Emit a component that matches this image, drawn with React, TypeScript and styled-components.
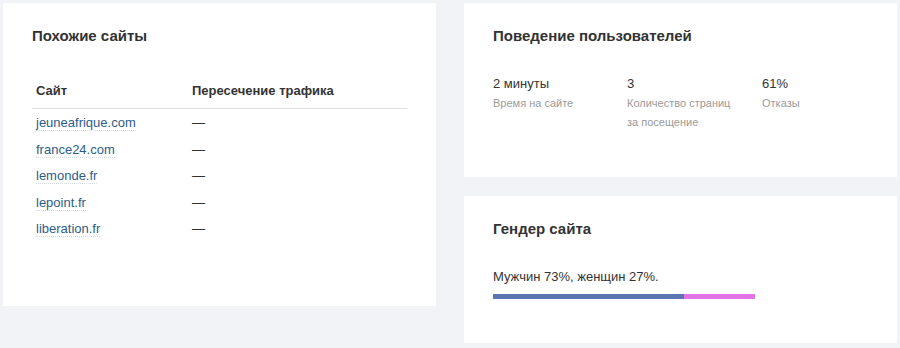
import React from "react";
import styled, { createGlobalStyle } from "styled-components";

const Global = createGlobalStyle`
  html, body { margin: 0; padding: 0; background: #f2f3f6; }
  body { font-family: "Liberation Sans", Arial, sans-serif; color: #333; }
`;

const Page = styled.div`
  display: grid;
  grid-template-columns: 433px 433px;
  column-gap: 28px;
  padding: 3px 3px 0 3px;
  align-items: start;
`;

const Column = styled.div`
  display: flex;
  flex-direction: column;
  gap: 19px;
`;

const Card = styled.div<{ $h: number }>`
  background: #fff;
  height: ${(p) => p.$h}px;
  box-sizing: border-box;
  padding: 24px 29px 0 29px;
`;

const Title = styled.h2`
  margin: 0;
  font-size: 15px;
  line-height: 18px;
  font-weight: bold;
  color: #333;
`;

const Table = styled.table`
  width: 100%;
  border-collapse: collapse;
  margin-top: 28px;
  font-size: 13px;
`;

const Th = styled.th<{ $w?: string }>`
  text-align: left;
  font-weight: bold;
  color: #333;
  padding: 10px 4px 9px 4px;
  border-bottom: 1px solid #dde0e4;
  line-height: 16px;
  width: ${(p) => p.$w ?? "auto"};
`;

const Td = styled.td`
  padding: 4px 4px 3px 4px;
  line-height: 19.5px;
  height: 19.5px;
  color: #333;
`;

const SiteLink = styled.a`
  color: #2d5c88;
  text-decoration: none;
  border-bottom: 1px dotted #d6dbe0;
`;

const Stats = styled.div`
  display: grid;
  grid-template-columns: 134px 135px 1fr;
  margin-top: 31px;
`;

const StatValue = styled.div`
  font-size: 13px;
  line-height: 16px;
  color: #333;
`;

const StatLabel = styled.div`
  font-size: 11px;
  line-height: 19px;
  color: #9a9a9a;
  margin-top: 2px;
`;

const GenderText = styled.div`
  margin-top: 31px;
  font-size: 13px;
  line-height: 16px;
  color: #333;
`;

const Bar = styled.div`
  display: flex;
  width: 262px;
  height: 5px;
  margin-top: 9px;
`;

const Segment = styled.div<{ $c: string }>`
  background: ${(p) => p.$c};
  height: 100%;
`;

const sites = [
  "jeuneafrique.com",
  "france24.com",
  "lemonde.fr",
  "lepoint.fr",
  "liberation.fr",
];

export default function App() {
  const male = 73;
  return (
    <>
      <Global />
      <Page>
        <Card $h={303}>
          <Title>Похожие сайты</Title>
          <Table>
            <thead>
              <tr>
                <Th $w="148px">Сайт</Th>
                <Th>Пересечение трафика</Th>
              </tr>
            </thead>
            <tbody>
              {sites.map((s) => (
                <tr key={s}>
                  <Td>
                    <SiteLink href="#">{s}</SiteLink>
                  </Td>
                  <Td>—</Td>
                </tr>
              ))}
            </tbody>
          </Table>
        </Card>
        <Column>
          <Card $h={174}>
            <Title>Поведение пользователей</Title>
            <Stats>
              <div>
                <StatValue>2 минуты</StatValue>
                <StatLabel>Время на сайте</StatLabel>
              </div>
              <div>
                <StatValue>3</StatValue>
                <StatLabel>
                  Количество страниц
                  <br />
                  за посещение
                </StatLabel>
              </div>
              <div>
                <StatValue>61%</StatValue>
                <StatLabel>Отказы</StatLabel>
              </div>
            </Stats>
          </Card>
          <Card $h={147}>
            <Title>Гендер сайта</Title>
            <GenderText>Мужчин 73%, женщин 27%.</GenderText>
            <Bar>
              <Segment $c="#5b76b3" style={{ width: `${male}%` }} />
              <Segment $c="#e274e6" style={{ width: `${100 - male}%` }} />
            </Bar>
          </Card>
        </Column>
      </Page>
    </>
  );
}
